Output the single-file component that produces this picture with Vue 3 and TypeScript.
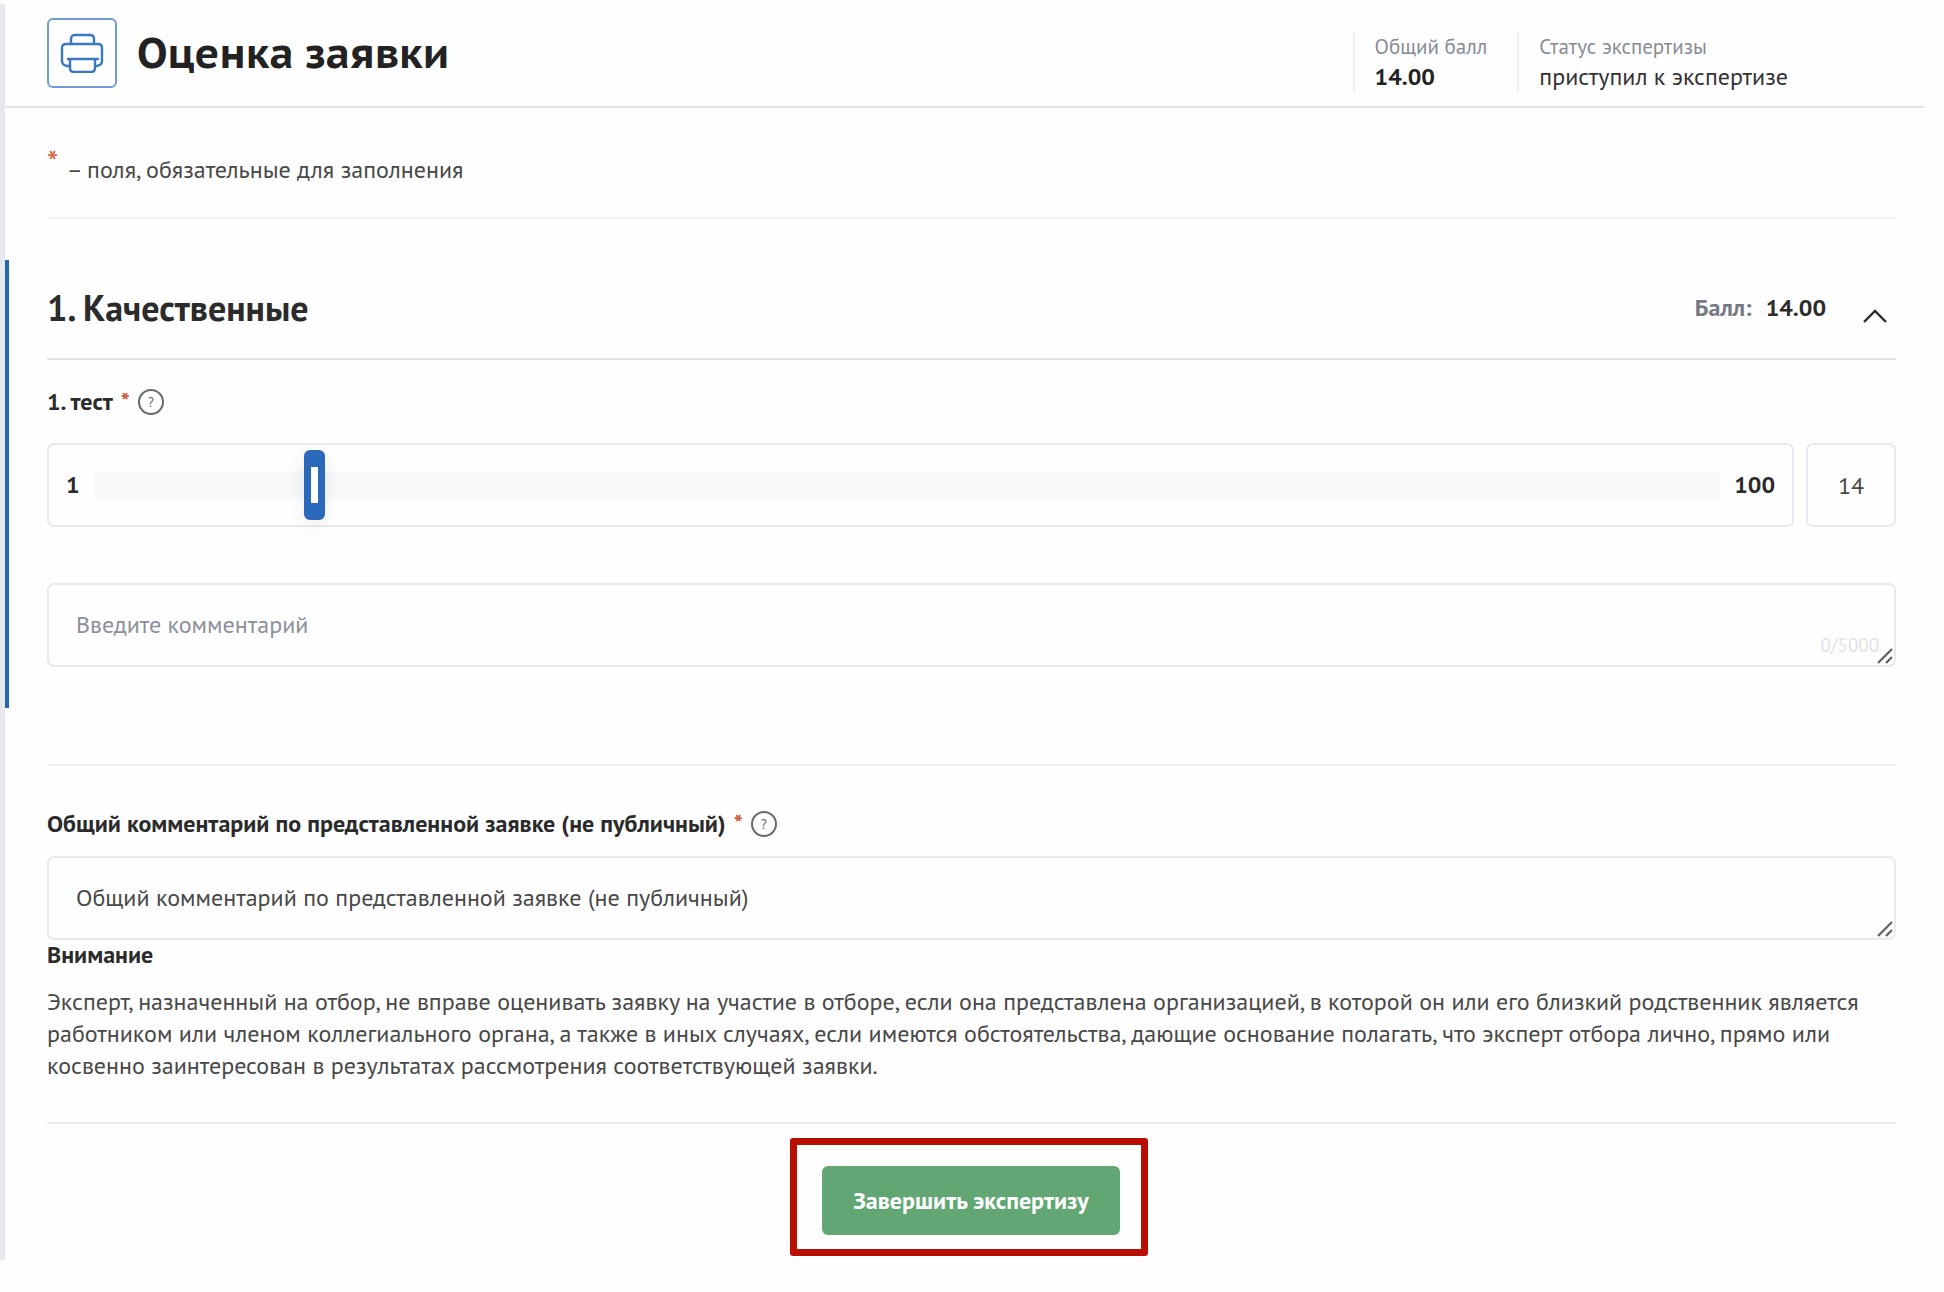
<script setup lang="ts">
import { ref } from 'vue'

const score = ref(14)
const comment = ref('')
const generalComment = ref('Общий комментарий по представленной заявке (не публичный)')
const expanded = ref(true)
const maxLength = 5000
</script>

<template>
  <main class="page">
    <header class="header">
      <button class="print" type="button" aria-label="Печать">
        <svg viewBox="0 0 44 40" width="44" height="40" fill="none" stroke="#3b78c4" stroke-width="2.4" stroke-linejoin="round" stroke-linecap="round">
          <path d="M11 11V6q0-4 4-4h15q4 0 4 4v5" />
          <path d="M9 33H7q-5-1-5-5V15q0-4 4-4h32q4 0 4 4v13q0 4-5 5h-2" />
          <path d="M8 26h30M10 26v9q0 4 4 4h17q4 0 4-4v-9" />
        </svg>
      </button>
      <h1 class="title">Оценка заявки</h1>
      <dl class="summary">
        <div class="fact">
          <dt>Общий балл</dt>
          <dd class="strong">{{ score.toFixed(2) }}</dd>
        </div>
        <div class="fact">
          <dt>Статус экспертизы</dt>
          <dd>приступил к экспертизе</dd>
        </div>
      </dl>
    </header>

    <p class="note"><span class="star">*</span> – поля, обязательные для заполнения</p>

    <section class="criteria">
      <div class="criteria-head">
        <h2 class="heading">1. Качественные</h2>
        <span class="points">Балл: <b>{{ score.toFixed(2) }}</b></span>
        <button class="toggle" type="button" aria-label="Свернуть" :aria-expanded="expanded" @click="expanded = !expanded">
          <svg viewBox="0 0 26 16" width="26" height="16" fill="none" stroke="#2b2b2b" stroke-width="2.4"><path d="M2 14 13 3l11 11" /></svg>
        </button>
      </div>
      <div class="criteria-body">
        <div class="label">
          <label for="score">1. тест</label><span class="req">*</span>
          <button class="help" type="button" aria-label="Подсказка">?</button>
        </div>
        <div class="score-row">
          <div class="slider">
            <span>1</span>
            <input id="score" v-model.number="score" class="range" type="range" min="1" max="100" />
            <span>100</span>
          </div>
          <input v-model.number="score" class="number" type="text" aria-label="Балл" />
        </div>
        <div class="field">
          <textarea v-model="comment" class="area" rows="1" placeholder="Введите комментарий" aria-label="Комментарий" :maxlength="maxLength"></textarea>
          <span class="counter">{{ comment.length }}/{{ maxLength }}</span>
          <svg class="grip" viewBox="0 0 16 16" width="16" height="16" fill="none" stroke="#666" stroke-width="2.4"><path d="M1 15 15 1M9 15l6-6" /></svg>
        </div>
      </div>
    </section>

    <section class="general">
      <div class="label">
        <label for="general">Общий комментарий по представленной заявке (не публичный)</label><span class="req">*</span>
        <button class="help" type="button" aria-label="Подсказка">?</button>
      </div>
      <div class="field">
        <textarea id="general" v-model="generalComment" class="area" rows="1"></textarea>
        <svg class="grip" viewBox="0 0 16 16" width="16" height="16" fill="none" stroke="#666" stroke-width="2.4"><path d="M1 15 15 1M9 15l6-6" /></svg>
      </div>
      <h3 class="warning">Внимание</h3>
      <p class="text">
        Эксперт, назначенный на отбор, не вправе оценивать заявку на участие в отборе, если она представлена организацией, в которой он или его близкий родственник является
        работником или членом коллегиального органа, а также в иных случаях, если имеются обстоятельства, дающие основание полагать, что эксперт отбора лично, прямо или
        косвенно заинтересован в результатах рассмотрения соответствующей заявки.
      </p>
    </section>

    <footer class="footer">
      <div class="highlight">
        <button class="submit" type="button">Завершить экспертизу</button>
      </div>
    </footer>
  </main>
</template>

<style>
body {
  background: #fefefe;
}
</style>

<style scoped>
.page {
  box-sizing: border-box;
  margin: 4px 20px 32px 0;
  border-left: 5px solid #e6e8ee;
  font-family: 'PT Sans', 'Noto Sans', sans-serif;
  font-size: 24px;
  line-height: 32px;
  color: #484848;
}
.page * {
  box-sizing: border-box;
}
h1, h2, h3, p, dl, dd {
  margin: 0;
}
button, input, textarea {
  font: inherit;
  color: inherit;
}
.header {
  display: flex;
  align-items: center;
  height: 104px;
  padding: 0 136px 4px 42px;
  border-bottom: 2px solid #e0e4ea;
}
.print {
  display: grid;
  place-items: center;
  width: 70px;
  height: 70px;
  padding: 0;
  border: 2px solid #6f9dd3;
  border-radius: 6px;
  background: none;
}
.title {
  margin-left: 20px;
  font-family: 'PT Sans Caption', 'Noto Sans', sans-serif;
  font-size: 42px;
  line-height: 48px;
  font-weight: 700;
  color: #222;
}
.summary {
  display: flex;
  gap: 30px;
  margin-left: auto;
  padding-top: 18px;
}
.fact {
  padding-left: 20px;
  border-left: 2px solid #eceef2;
  line-height: 30px;
}
.fact dt {
  font-size: 21px;
  color: #868c96;
}
.fact dd {
  color: #333;
}
.fact .strong {
  font-weight: 700;
  color: #222;
}
.note {
  margin: 0 28px 0 42px;
  padding: 46px 0;
  height: 111px;
  border-bottom: 2px solid #eef0f2;
}
.star {
  position: relative;
  top: -4px;
  margin-right: 4px;
  font-size: 32px;
  line-height: 24px;
  color: #dd5a35;
}
.criteria {
  margin-top: 41px;
  height: 448px;
  padding: 0 28px 0 38px;
  border-left: 4px solid #2565b8;
}
.criteria-head {
  display: flex;
  align-items: center;
  height: 100px;
  padding-bottom: 2px;
  border-bottom: 2px solid #e0e4ea;
}
.heading {
  font-size: 36px;
  line-height: 40px;
  font-weight: 700;
  color: #2b2b2b;
}
.points {
  margin-left: auto;
  font-weight: 700;
  color: #747b86;
}
.points b {
  margin-left: 8px;
  color: #2b2b2b;
}
.toggle {
  display: grid;
  margin: 15px 8px 0 36px;
  padding: 0;
  border: 0;
  background: none;
}
.label {
  display: flex;
  align-items: center;
  font-weight: 700;
  color: #2b2b2b;
}
.req {
  margin: 0 8px;
  color: #d2593a;
  font-size: 24px;
  line-height: 32px;
}
.help {
  width: 26px;
  height: 26px;
  padding: 0;
  border: 2px solid #666a70;
  border-radius: 50%;
  background: none;
  font-size: 14px;
  line-height: 20px;
  font-weight: 400;
  color: #666a70;
}
.criteria-body {
  padding-top: 26px;
}
.score-row {
  display: flex;
  gap: 12px;
  margin-top: 25px;
}
.slider,
.number,
.area {
  height: 84px;
  border: 2px solid #e6e9ee;
  border-radius: 7px;
  background: #fefefe;
}
.slider {
  flex: 1;
  display: flex;
  align-items: center;
  gap: 14px;
  padding: 0 17px;
  font-weight: 700;
  color: #2b2b2b;
}
.range {
  flex: 1;
  min-width: 0;
  height: 70px;
  margin: 0;
  appearance: none;
  background: none;
}
.range::-webkit-slider-runnable-track {
  height: 28px;
  border-radius: 3px;
  background: #f7f8fa;
}
.range::-webkit-slider-thumb {
  appearance: none;
  width: 21px;
  height: 70px;
  margin-top: -21px;
  border-radius: 6px;
  background: linear-gradient(#fff, #fff) center / 7px 36px no-repeat #2b6aba;
  box-shadow: 0 4px 16px rgba(0, 0, 0, 0.08);
}
.number {
  width: 90px;
  text-align: center;
}
.field {
  position: relative;
  display: flex;
}
.criteria-body .field {
  margin-top: 56px;
}
.area {
  width: 100%;
  padding: 24px 27px;
  resize: none;
  overflow: hidden;
}
.area::placeholder {
  color: #8b919b;
  opacity: 1;
}
.counter {
  position: absolute;
  right: 17px;
  bottom: 6px;
  font-size: 19px;
  color: #dfe2e7;
}
.grip {
  position: absolute;
  right: 3px;
  bottom: 3px;
}
.general {
  margin: 56px 28px 0 42px;
  padding: 42px 0 32px;
  height: 360px;
  border-top: 2px solid #eef0f3;
  border-bottom: 2px solid #e8eaef;
}
.general .field {
  margin-top: 16px;
}
.warning {
  font-size: 24px;
  line-height: 30px;
  font-weight: 700;
  color: #2b2b2b;
}
.text {
  margin-top: 16px;
}
.footer {
  display: flex;
  justify-content: center;
  padding: 14px 0 4px 9px;
}
.highlight {
  padding: 21px 21px 14px 25px;
  border: 7px solid #b80f02;
  border-radius: 3px;
}
.submit {
  width: 298px;
  height: 69px;
  padding: 0;
  border: 0;
  border-radius: 6px;
  background: #61a673;
  font-weight: 700;
  color: #fff;
}
</style>
